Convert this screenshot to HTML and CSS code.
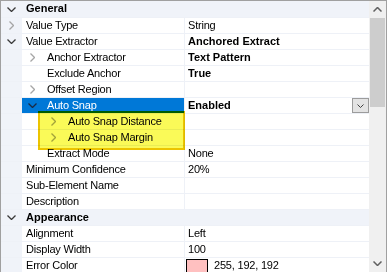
FILE: index.html
```html
<!DOCTYPE html>
<html>
<head>
<meta charset="utf-8">
<link rel="stylesheet" href="styles.css">
</head>
<body>
<div class="pg">
  <div class="list">
    <div class="row cat">
      <div class="margin"><svg class="g-exp" width="9" height="5" viewBox="0 0 9 5"><polyline points="0.5,0.5 4.5,4.5 8.5,0.5"/></svg></div>
      <div class="label">General</div>
    </div>
    <div class="row">
      <div class="margin"><svg class="g-col" width="5" height="9" viewBox="0 0 5 9"><polyline points="0.5,0.5 4.5,4.5 0.5,8.5"/></svg></div>
      <div class="name"><span class="label">Value Type</span></div>
      <div class="sep"></div>
      <div class="val">String</div>
    </div>
    <div class="row">
      <div class="margin"><svg class="g-exp" width="9" height="5" viewBox="0 0 9 5"><polyline points="0.5,0.5 4.5,4.5 8.5,0.5"/></svg></div>
      <div class="name"><span class="label">Value Extractor</span></div>
      <div class="sep"></div>
      <div class="val bold">Anchored Extract</div>
    </div>
    <div class="row">
      <div class="margin"></div>
      <div class="name l1"><span class="glyph"><svg class="g-col" width="5" height="9" viewBox="0 0 5 9"><polyline points="0.5,0.5 4.5,4.5 0.5,8.5"/></svg></span><span class="label">Anchor Extractor</span></div>
      <div class="sep"></div>
      <div class="val bold">Text Pattern</div>
    </div>
    <div class="row">
      <div class="margin"></div>
      <div class="name l1"><span class="glyph"></span><span class="label">Exclude Anchor</span></div>
      <div class="sep"></div>
      <div class="val bold">True</div>
    </div>
    <div class="row">
      <div class="margin"></div>
      <div class="name l1"><span class="glyph"><svg class="g-col" width="5" height="9" viewBox="0 0 5 9"><polyline points="0.5,0.5 4.5,4.5 0.5,8.5"/></svg></span><span class="label">Offset Region</span></div>
      <div class="sep"></div>
      <div class="val"></div>
    </div>
    <div class="row">
      <div class="margin"></div>
      <div class="name l1 selected"><span class="glyph"><svg class="g-sel" width="9" height="5" viewBox="0 0 9 5"><polyline points="0.5,0.5 4.5,4.5 8.5,0.5"/></svg></span><span class="label">Auto Snap</span></div>
      <div class="sep"></div>
      <div class="val bold has-btn"><span>Enabled</span><span class="dd"><svg width="7" height="4" viewBox="0 0 7 4"><polyline points="0.5,0.5 3.5,3.5 6.5,0.5"/></svg></span></div>
    </div>
    <div class="row">
      <div class="margin"></div>
      <div class="name l2"><span class="glyph"><svg class="g-col" width="5" height="9" viewBox="0 0 5 9"><polyline points="0.5,0.5 4.5,4.5 0.5,8.5"/></svg></span><span class="label">Auto Snap Distance</span></div>
      <div class="sep"></div>
      <div class="val"></div>
    </div>
    <div class="row">
      <div class="margin"></div>
      <div class="name l2"><span class="glyph"><svg class="g-col" width="5" height="9" viewBox="0 0 5 9"><polyline points="0.5,0.5 4.5,4.5 0.5,8.5"/></svg></span><span class="label">Auto Snap Margin</span></div>
      <div class="sep"></div>
      <div class="val"></div>
    </div>
    <div class="row">
      <div class="margin"></div>
      <div class="name l1"><span class="glyph"></span><span class="label">Extract Mode</span></div>
      <div class="sep"></div>
      <div class="val">None</div>
    </div>
    <div class="row">
      <div class="margin"></div>
      <div class="name"><span class="label">Minimum Confidence</span></div>
      <div class="sep"></div>
      <div class="val">20%</div>
    </div>
    <div class="row">
      <div class="margin"></div>
      <div class="name"><span class="label">Sub-Element Name</span></div>
      <div class="sep"></div>
      <div class="val"></div>
    </div>
    <div class="row">
      <div class="margin"></div>
      <div class="name"><span class="label">Description</span></div>
      <div class="sep"></div>
      <div class="val"></div>
    </div>
    <div class="row cat">
      <div class="margin"><svg class="g-exp" width="9" height="5" viewBox="0 0 9 5"><polyline points="0.5,0.5 4.5,4.5 8.5,0.5"/></svg></div>
      <div class="label">Appearance</div>
    </div>
    <div class="row">
      <div class="margin"></div>
      <div class="name"><span class="label">Alignment</span></div>
      <div class="sep"></div>
      <div class="val">Left</div>
    </div>
    <div class="row">
      <div class="margin"></div>
      <div class="name"><span class="label">Display Width</span></div>
      <div class="sep"></div>
      <div class="val">100</div>
    </div>
    <div class="row">
      <div class="margin"></div>
      <div class="name"><span class="label">Error Color</span></div>
      <div class="sep"></div>
      <div class="val color"><span class="swatch"></span><span>255, 192, 192</span></div>
    </div>
  </div>
  <div class="scrollbar">
    <div class="sb-btn"><svg width="9" height="5" viewBox="0 0 9 5"><polyline points="0.5,4.5 4.5,0.5 8.5,4.5"/></svg></div>
    <div class="sb-track"><div class="sb-thumb"></div></div>
    <div class="sb-btn"><svg width="9" height="5" viewBox="0 0 9 5"><polyline points="0.5,0.5 4.5,4.5 8.5,0.5"/></svg></div>
  </div>
  <div class="highlight"></div>
</div>
</body>
</html>
```

FILE: styles.css
```css
* { box-sizing: border-box; }
html, body { margin: 0; padding: 0; background: #ffffff; }
body {
  font-family: "Liberation Sans", Arial, sans-serif;
  font-size: 11px;
  color: #000000;
  overflow: hidden;
  letter-spacing: -0.2px;
}
.pg {
  position: relative;
  width: 387px;
  height: 272px;
  border: 1px solid #a0a0a0;
  border-bottom: none;
  display: flex;
  overflow: hidden;
  background: #ffffff;
}
.list {
  width: 368px;
  display: flex;
  flex-direction: column;
}
.row {
  height: 16px;
  display: flex;
  border-top: 1px solid #eef1f7;
  flex: none;
}
.row:first-child { border-top: none; }
.margin {
  width: 21px;
  flex: none;
  background: #f0f3f9;
  display: flex;
  align-items: center;
  justify-content: center;
}
.row.cat { background: #f0f3f9; }
.row.cat .label {
  font-weight: bold;
  padding-left: 4px;
  line-height: 15px;
  letter-spacing: 0;
}
.name {
  width: 162px;
  flex: none;
  display: flex;
  align-items: center;
  white-space: nowrap;
  overflow: hidden;
}
.name .label { padding-left: 4px; line-height: 15px; }
.name.l2 { padding-left: 21px; }
.glyph {
  width: 21px;
  flex: none;
  display: flex;
  align-items: center;
  justify-content: center;
  height: 15px;
}
.name.selected { background: #0078d7; color: #ffffff; }
.sep { width: 1px; flex: none; background: #eef1f7; }
.val {
  flex: 1;
  padding-left: 3px;
  line-height: 15px;
  white-space: nowrap;
  display: flex;
  align-items: center;
}
.bold { font-weight: bold; letter-spacing: 0; }
.has-btn { justify-content: space-between; padding-right: 0; }
.dd {
  width: 17px;
  height: 15px;
  border: 1px solid #9c9c9c;
  background: #e3e3e3;
  display: flex;
  align-items: center;
  justify-content: center;
}
svg { display: block; fill: none; stroke-width: 1.3; }
.g-exp polyline { stroke: #3a3a3a; }
.g-col polyline { stroke: #a6a6a6; }
.g-sel polyline { stroke: #1b2a44; }
.dd polyline { stroke: #404040; stroke-width: 1; }
.color { padding-left: 1px; align-items: flex-start; }
.swatch {
  width: 22px;
  height: 14px;
  margin-top: 1px;
  border: 1px solid #000000;
  background: #ffc0c0;
  margin-right: 6px;
  flex: none;
}
.scrollbar {
  width: 17px;
  flex: none;
  background: #f0f0f0;
  display: flex;
  flex-direction: column;
}
.sb-btn {
  height: 17px;
  flex: none;
  display: flex;
  align-items: center;
  justify-content: center;
}
.sb-btn polyline { stroke: #606060; stroke-width: 1.5; }
.sb-track { flex: 1; padding: 0 1px; }
.sb-thumb { height: 89px; background: #cdcdcd; }
.highlight {
  position: absolute;
  left: 37px;
  top: 110px;
  width: 147px;
  height: 39px;
  border: 2px solid #ecc400;
  background: #fafa58;
  mix-blend-mode: multiply;
}
```
